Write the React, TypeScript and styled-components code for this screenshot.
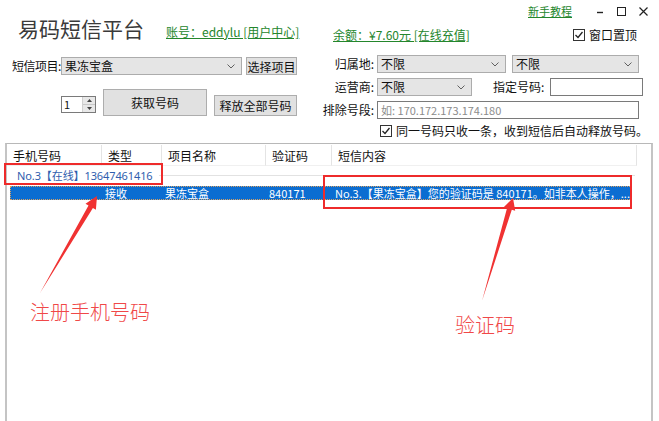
import React from 'react';
import styled, { createGlobalStyle } from 'styled-components';

const GlobalStyle = createGlobalStyle`
  body {
    margin: 0;
    font-family: "Noto Sans CJK SC", "Noto Sans", sans-serif;
    font-size: 12px;
    color: #111;
    background: #fff;
  }
`;

const Page = styled.div`
  position: relative;
  width: 659px;
  height: 421px;
  overflow: hidden;
  background: #fff;
`;

const Top = styled.div`
  display: flex;
  height: 143px;
`;

const LeftPane = styled.div`
  width: 320px;
  display: flex;
  flex-direction: column;
`;

const RightPane = styled.div`
  flex: 1;
  display: flex;
  flex-direction: column;
`;

const TitleRow = styled.div`
  display: flex;
  align-items: baseline;
  height: 47px;
  padding: 13px 0 0 18px;
  box-sizing: border-box;
`;

const Title = styled.h1`
  margin: 0;
  font-size: 21px;
  font-weight: 400;
  line-height: 30px;
  color: #3a3a3a;
`;

const Link = styled.a<{ $gap?: number; $size?: number }>`
  margin-left: ${(p) => p.$gap ?? 0}px;
  color: #24862c;
  text-decoration: underline;
  font-size: ${(p) => p.$size ?? 12}px;
  line-height: 14px;
  white-space: nowrap;
  cursor: pointer;
`;

const Row = styled.div<{ $top: number; $left?: number }>`
  display: flex;
  align-items: center;
  margin-top: ${(p) => p.$top}px;
  padding-left: ${(p) => p.$left ?? 0}px;
  height: 18px;
`;

const ActionRow = styled.div`
  display: flex;
  align-items: flex-start;
  margin-top: 14px;
  padding-left: 61px;
`;

const Label = styled.span<{ $w?: number; $gap?: number; $left?: boolean }>`
  width: ${(p) => (p.$w ? `${p.$w}px` : 'auto')};
  margin-left: ${(p) => p.$gap ?? 0}px;
  text-align: ${(p) => (p.$left ? 'left' : 'right')};
  letter-spacing: ${(p) => (p.$left ? '-0.5px' : '0')};
  white-space: nowrap;
  line-height: 14px;
`;

const SelectBox = styled.div<{ $w: number; $gap?: number }>`
  position: relative;
  width: ${(p) => p.$w}px;
  height: 18px;
  margin-left: ${(p) => p.$gap ?? 0}px;
  box-sizing: border-box;
  border: 1px solid #acacac;
  background: #e5e5e5;
  padding-left: 3px;
  display: flex;
  align-items: center;
  line-height: 14px;
  svg {
    position: absolute;
    right: 6px;
    top: 6px;
  }
`;

const TextBox = styled.div<{ $w: number; $gap?: number; $hint?: boolean }>`
  width: ${(p) => p.$w}px;
  height: 18px;
  margin-left: ${(p) => p.$gap ?? 0}px;
  box-sizing: border-box;
  border: 1px solid #7a7a7a;
  background: #fff;
  padding-left: 3px;
  display: flex;
  align-items: center;
  color: ${(p) => (p.$hint ? '#8c8c8c' : '#111')};
  font-size: 11px;
`;

const Button = styled.button<{ $w: number; $h: number; $gap?: number; $top?: number }>`
  width: ${(p) => p.$w}px;
  height: ${(p) => p.$h}px;
  margin: ${(p) => p.$top ?? 0}px 0 0 ${(p) => p.$gap ?? 0}px;
  padding: 0;
  box-sizing: border-box;
  border: 1px solid #adadad;
  background: #e1e1e1;
  font-family: inherit;
  font-size: 12px;
  color: #111;
`;

const Spinner = styled.div`
  display: flex;
  width: 35px;
  height: 17px;
  margin-top: 7px;
  box-sizing: border-box;
  border: 1px solid #7a7a7a;
  background: #fff;
  font-size: 11px;
`;

const SpinValue = styled.span`
  flex: 1;
  padding-left: 2px;
  line-height: 15px;
`;

const SpinArrows = styled.div`
  width: 12px;
  display: flex;
  flex-direction: column;
  border-left: 1px solid #d0d0d0;
  background: #e8e8e8;
  span {
    flex: 1;
    display: flex;
    align-items: center;
    justify-content: center;
  }
  span + span {
    border-top: 1px solid #c8c8c8;
  }
`;

const TopBar = styled.div`
  display: flex;
  justify-content: flex-end;
  align-items: center;
  height: 22px;
  padding-right: 8px;
`;

const WinButtons = styled.div`
  display: flex;
  margin-left: 20px;
  gap: 7px;
`;

const WinButton = styled.span`
  width: 15px;
  height: 12px;
  display: flex;
  align-items: center;
  justify-content: center;
`;

const BalanceRow = styled.div`
  display: flex;
  align-items: center;
  justify-content: space-between;
  height: 26px;
  padding: 0 22px 0 13px;
`;

const Check = styled.label`
  display: flex;
  align-items: center;
  gap: 4px;
  white-space: nowrap;
  line-height: 14px;
`;

const CheckBox = styled.span`
  width: 12px;
  height: 12px;
  box-sizing: border-box;
  border: 1px solid #333;
  background: #fff;
  display: flex;
  align-items: center;
  justify-content: center;
`;

const Table = styled.div`
  margin-left: 5px;
  width: 648px;
  height: 278px;
  box-sizing: border-box;
  border: 2px solid #c4c4c4;
  border-width: 1px 2px 0 2px;
  border-top-color: #b8b8b8;
`;

const HeaderRow = styled.div`
  display: flex;
  height: 21px;
  margin-top: 1px;
`;

const HeadCell = styled.div<{ $w: number }>`
  width: ${(p) => p.$w}px;
  box-sizing: border-box;
  padding-left: 6px;
  border-right: 1px solid #e4e4e4;
  border-bottom: 1px solid #f0f0f0;
  display: flex;
  align-items: center;
  white-space: nowrap;
`;

const GroupRow = styled.div`
  display: flex;
  align-items: center;
  height: 19px;
  padding-left: 10px;
  padding-right: 16px;
  &::after {
    content: '';
    flex: 1;
    height: 1px;
    margin-left: 6px;
    background: #e2e2e2;
  }
`;

const GroupText = styled.span`
  color: #2f5eae;
  font-family: "Noto Sans", "Noto Sans CJK SC", sans-serif;
  font-size: 11px;
  line-height: 14px;
  letter-spacing: -0.1px;
`;

const DataRow = styled.div`
  display: flex;
  align-items: center;
  margin: 1px 0 0 3px;
  width: 622px;
  height: 14px;
  box-sizing: border-box;
  border: 1px dotted #d9a060;
  background: #0b6dd1;
  color: #fff;
  font-size: 11px;
  line-height: 12px;
`;

const Cell = styled.span<{ $w?: number }>`
  ${(p) => (p.$w ? `width: ${p.$w}px;` : 'flex: 1; min-width: 0;')}
  padding-left: 6px;
  box-sizing: border-box;
  white-space: nowrap;
`;

const RedBox = styled.div<{ $x: number; $y: number; $w: number; $h: number }>`
  position: absolute;
  left: ${(p) => p.$x}px;
  top: ${(p) => p.$y}px;
  width: ${(p) => p.$w}px;
  height: ${(p) => p.$h}px;
  box-sizing: border-box;
  border: 2px solid #ee2b2b;
`;

const Note = styled.span<{ $x: number; $y: number }>`
  position: absolute;
  left: ${(p) => p.$x}px;
  top: ${(p) => p.$y}px;
  color: #f04848;
  font-size: 20px;
  font-weight: 300;
  line-height: 22px;
  white-space: nowrap;
`;

const Arrows = styled.svg`
  position: absolute;
  left: 0;
  top: 0;
  pointer-events: none;
`;

const Chevron = () => (
  <svg width="8" height="5" viewBox="0 0 8 5">
    <path d="M0.5 0.5 L4 4 L7.5 0.5" fill="none" stroke="#606060" strokeWidth="1" />
  </svg>
);

const Tick = () => (
  <svg width="10" height="10" viewBox="0 0 10 10">
    <path d="M1.5 5 L4 7.5 L8.5 2" fill="none" stroke="#222" strokeWidth="1.3" />
  </svg>
);

const Select = ({ w, gap, value }: { w: number; gap?: number; value: string }) => (
  <SelectBox $w={w} $gap={gap}>
    {value}
    <Chevron />
  </SelectBox>
);

const columns = [95, 60, 104, 66, 305];

export default function App() {
  return (
    <Page>
      <GlobalStyle />
      <Top>
        <LeftPane>
          <TitleRow>
            <Title>易码短信平台</Title>
            <Link $gap={22}>账号：eddylu [用户中心]</Link>
          </TitleRow>
          <Row $top={10} $left={12}>
            <Label $w={49} $left>短信项目:</Label>
            <Select w={181} value="果冻宝盒" />
            <Button $w={51} $h={18} $gap={4}>选择项目</Button>
          </Row>
          <ActionRow>
            <Spinner>
              <SpinValue>1</SpinValue>
              <SpinArrows>
                <span>
                  <svg width="5" height="3" viewBox="0 0 5 3"><path d="M0 3 L2.5 0 L5 3 Z" fill="#444" /></svg>
                </span>
                <span>
                  <svg width="5" height="3" viewBox="0 0 5 3"><path d="M0 0 L2.5 3 L5 0 Z" fill="#444" /></svg>
                </span>
              </SpinArrows>
            </Spinner>
            <Button $w={104} $h={27} $gap={7}>获取号码</Button>
            <Button $w={83} $h={21} $gap={7} $top={6}>释放全部号码</Button>
          </ActionRow>
        </LeftPane>
        <RightPane>
          <TopBar>
            <Link $size={11}>新手教程</Link>
            <WinButtons>
              <WinButton>
                <svg width="8" height="8" viewBox="0 0 8 8"><path d="M1 5.5 H7" stroke="#222" strokeWidth="1.4" /></svg>
              </WinButton>
              <WinButton>
                <svg width="9" height="9" viewBox="0 0 9 9"><rect x="0.5" y="0.5" width="8" height="8" fill="none" stroke="#222" strokeWidth="1" /></svg>
              </WinButton>
              <WinButton>
                <svg width="9" height="9" viewBox="0 0 9 9"><path d="M0.5 0.5 L8.5 8.5 M8.5 0.5 L0.5 8.5" stroke="#222" strokeWidth="1.2" /></svg>
              </WinButton>
            </WinButtons>
          </TopBar>
          <BalanceRow>
            <Link>余额：¥7.60元 [在线充值]</Link>
            <Check>
              <CheckBox><Tick /></CheckBox>
              窗口置顶
            </Check>
          </BalanceRow>
          <Row $top={7}>
            <Label $w={54}>归属地:</Label>
            <Select w={129} gap={3} value="不限" />
            <Select w={127} gap={6} value="不限" />
          </Row>
          <Row $top={5}>
            <Label $w={54}>运营商:</Label>
            <Select w={95} gap={3} value="不限" />
            <Label $gap={21}>指定号码:</Label>
            <TextBox $w={93} $gap={6} />
          </Row>
          <Row $top={5}>
            <Label $w={54}>排除号段:</Label>
            <TextBox $w={262} $gap={3} $hint>如: 170.172.173.174.180</TextBox>
          </Row>
          <Row $top={3} $left={60}>
            <Check>
              <CheckBox><Tick /></CheckBox>
              同一号码只收一条，收到短信后自动释放号码。
            </Check>
          </Row>
        </RightPane>
      </Top>
      <Table>
        <HeaderRow>
          {['手机号码', '类型', '项目名称', '验证码', '短信内容'].map((h, i) => (
            <HeadCell key={h} $w={columns[i]}>{h}</HeadCell>
          ))}
        </HeaderRow>
        <GroupRow>
          <GroupText>No.3【在线】13647461416</GroupText>
        </GroupRow>
        <DataRow>
          <Cell $w={88} />
          <Cell $w={60}>接收</Cell>
          <Cell $w={104}>果冻宝盒</Cell>
          <Cell $w={66}>840171</Cell>
          <Cell>No.3.【果冻宝盒】您的验证码是 840171。如非本人操作，...</Cell>
        </DataRow>
      </Table>

      <RedBox $x={4} $y={163} $w={159} $h={22} />
      <RedBox $x={323} $y={175} $w={309} $h={34} />
      <Arrows width="659" height="421" viewBox="0 0 659 421">
        <polygon points="40,293 92.9,208.1 95.9,209.8 97,196 85.5,203.8 88.5,205.5" fill="#f03232" />
        <polygon points="482,301 511.8,209.7 515.2,210.7 513,198 503.7,207.3 507,208.3" fill="#f03232" />
      </Arrows>
      <Note $x={30} $y={301}>注册手机号码</Note>
      <Note $x={455} $y={314}>验证码</Note>
    </Page>
  );
}
